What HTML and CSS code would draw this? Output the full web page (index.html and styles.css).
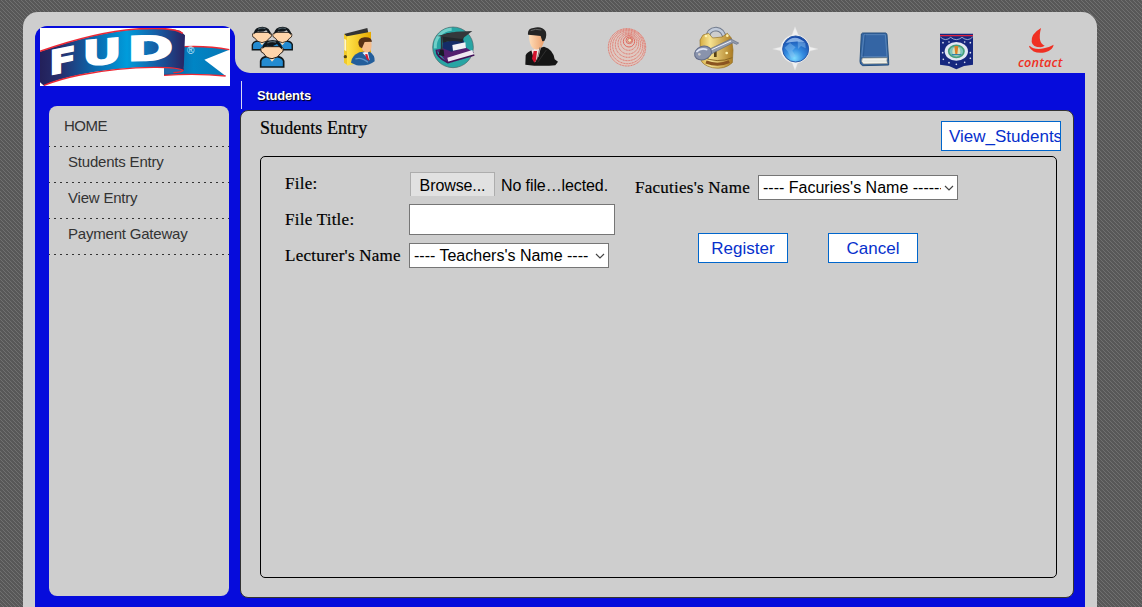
FILE: index.html
```html
<!DOCTYPE html>
<html lang="en">
<head>
<meta charset="utf-8">
<title>Students Entry</title>
<link rel="stylesheet" href="styles.css">
</head>
<body>
<div class="shell">
  <aside class="side">
    <svg class="logo" viewBox="120 84 570 174" role="img" aria-label="FUD">
      <defs>
        <linearGradient id="rib" x1="0" x2="1"><stop offset="0" stop-color="#23205a"/><stop offset=".15" stop-color="#26306f"/><stop offset=".38" stop-color="#0a69ae"/><stop offset=".6" stop-color="#009cdb"/><stop offset=".82" stop-color="#1858a0"/><stop offset="1" stop-color="#282462"/></linearGradient>
        <linearGradient id="tail" x1="0" x2="1"><stop offset="0" stop-color="#145292"/><stop offset=".45" stop-color="#0085c5"/><stop offset="1" stop-color="#0876b5"/></linearGradient>
      </defs>
      <rect x="120" y="84" width="570" height="174" fill="#fff"/>
      <path d="M545 140Q620 137 688 149L613 179L677 228Q590 219 492 226V205H550Z" fill="url(#tail)"/>
      <path d="M553 140Q625 137 688 149M677 228Q590 219 492 226" fill="none" stroke="#ee2834" stroke-width="4"/>
      <path d="M492 205Q530 202 548 209Q543 219 492 222Z" fill="#2368a8"/>
      <path d="M120 155Q290 96 410 88Q500 82 540 92L555 106L551 212Q530 202 450 202Q350 202 235 225Q170 238 132 257L120 247Z" fill="url(#rib)"/>
      <path d="M120 154Q285 96 410 87Q520 80 548 100" fill="none" stroke="#ee2834" stroke-width="5"/>
      <path d="M132 256Q180 237 240 225Q360 201 470 202Q540 203 549 211Q545 217 520 218" fill="none" stroke="#ee2834" stroke-width="4"/>
      <text class="logo-letter" transform="matrix(1.2 -.24 0 1 147 226)" font-size="100">F</text>
      <text class="logo-letter" transform="matrix(1.42 -.12 0 1 246 198)" font-size="104">U</text>
      <text class="logo-letter" transform="matrix(1.65 -.05 0 1 381 183)" font-size="102">D</text>
      <text class="logo-mark" x="561" y="161" font-size="30">®</text>
    </svg>
    <nav class="menu">
      <a class="item home">HOME</a>
      <a class="item">Students Entry</a>
      <a class="item">View Entry</a>
      <a class="item">Payment Gateway</a>
    </nav>
  </aside>
  <main class="main">
    <header class="icons">
      <svg class="w80" viewBox="0 48 240 141">
        <defs><g id="person"><path d="M-34 79V61Q-31 50-16 48H16Q31 50 35 61V79Z" fill="#238bd0" stroke="#101719" stroke-width="5"/><path d="M-12 47L0 63L14 47Z" fill="#ffe0bd"/><path d="M-26 18Q-37 21-32 34L-25 38Q-19 52 0 54Q19 52 26 38L32 34Q37 21 27 18Z" fill="#ffd5aa" stroke="#251b14" stroke-width="3"/><path d="M-29 25Q-29-1 2-2Q30 0 31 27Q21 19 15 10Q4 18-14 15Q-22 17-29 25" fill="#10171b"/><path d="M-14 7Q0-1 12 5" stroke="#50616a" stroke-width="4" fill="none"/></g></defs>
        <use href="#person" transform="translate(81 52) scale(.85)"/><use href="#person" transform="translate(142 52) scale(.85)"/><use href="#person" transform="translate(111 92)"/>
      </svg>
      <svg class="w90" viewBox="240 48 270 141">
        <defs><linearGradient id="folder"><stop stop-color="#ffe34c"/><stop offset="1" stop-color="#e7aa00"/></linearGradient></defs>
        <path d="M327 72L397 54L400 69L338 84Z" fill="#343434"/><path d="M327 72L337 80V165L327 158Z" fill="#f1c929"/><path d="M336 79L408 65V150L336 167Z" fill="url(#folder)"/><path d="M328 86L334 90V124L328 120Z" fill="#fff7ce"/><circle cx="331" cy="140" r="5" fill="#574711"/>
        <path d="M348 158Q349 137 373 127L401 123Q421 135 419 154Q402 169 365 166Z" fill="#235e9b"/><path d="M382 128L398 124L404 151Z" fill="#edf5ff"/><path d="M390 133L397 132L403 153L395 148Z" fill="#d21c32"/><path d="M374 103Q381 84 405 89Q414 101 407 121Q398 134 384 122Z" fill="#f6bc89"/><path d="M371 104Q367 84 388 82Q409 80 411 95L389 96L381 115Q372 112 371 104" fill="#573014"/><path d="M361 147Q379 140 399 157" stroke="#6194c8" stroke-width="4" fill="none"/>
      </svg>
      <svg class="w90" viewBox="510 48 270 141">
        <circle cx="654" cy="112" r="61" fill="#28a5a4" stroke="#456367" stroke-width="2"/><path d="M601 115A52 52 0 0 1 650 58" stroke="#70d0c9" stroke-width="9" fill="none"/>
        <path d="M604 119L676 102L717 128L635 157Z" fill="#542070"/><path d="M637 143L712 120L716 135L641 159Z" fill="#eee7f1"/><path d="M604 119Q603 141 639 158L718 135" fill="none" stroke="#421158" stroke-width="5"/>
        <path d="M624 96L684 87L694 113L649 125L622 114Z" fill="#142c68"/><path d="M652 105L691 97L693 114L654 122Z" fill="#f1f1f6"/><path d="M621 76Q648 59 688 76L682 97Q651 88 623 98Z" fill="#22272b"/><path d="M606 78L663 65L712 63L681 87Z" fill="#34383b"/><path d="M620 79V132" stroke="#30333b" stroke-width="5"/><path d="M615 119L626 119L628 139L611 135Z" fill="#171c24"/>
      </svg>
      <svg class="w90" viewBox="-15 48 270 141">
        <defs><linearGradient id="skin"><stop stop-color="#ffddb8"/><stop offset="1" stop-color="#ed9f6b"/></linearGradient></defs>
        <path d="M76 164L77 136Q82 125 98 120L132 110Q160 118 164 148L174 155L166 166Q120 170 76 164Z" fill="#151515"/><path d="M94 121L124 107L116 139L105 157Z" fill="#f5e5df"/><path d="M101 123L111 123L108 151L103 158L96 146Z" fill="#d2142d"/><path d="M87 72Q104 62 127 72Q137 90 130 100L126 110Q112 124 98 114Q87 103 87 72" fill="url(#skin)"/><path d="M84 74Q82 55 100 54Q125 47 137 64Q142 80 133 93L127 94L122 78Q100 75 84 74" fill="#242424"/><path d="M92 62Q106 55 124 60" stroke="#626262" stroke-width="3" fill="none"/><path d="M120 112L111 151M139 120L113 157" stroke="#3b3b3b" stroke-width="2"/>
      </svg>
      <svg class="w85" viewBox="255 48 255 141">
        <circle cx="381" cy="112" r="57" fill="#dfc8c1"/><g fill="none" stroke="#df6a5f" stroke-width="3" stroke-dasharray="3 1.8"><circle cx="381" cy="112" r="56"/><circle cx="382" cy="110" r="51"/><circle cx="383" cy="107" r="45"/><circle cx="384" cy="104" r="38"/><circle cx="385" cy="101" r="31"/><circle cx="386" cy="97" r="24"/><circle cx="387" cy="94" r="17" stroke-dasharray="none"/><circle cx="388" cy="91" r="10" stroke-dasharray="none"/></g><circle cx="389" cy="91" r="6" fill="#efe0bd" stroke="#c84735" stroke-width="2"/>
      </svg>
      <svg class="w85" viewBox="510 48 255 141">
        <defs><linearGradient id="gold"><stop stop-color="#d6ad41"/><stop offset=".3" stop-color="#f6e291"/><stop offset="1" stop-color="#ac7b22"/></linearGradient></defs>
        <path d="M622 86Q624 58 648 57Q671 59 674 87" fill="none" stroke="#717b8d" stroke-width="13"/><path d="M622 86Q624 58 648 57Q671 59 674 87" fill="none" stroke="#c0cada" stroke-width="7"/>
        <path d="M600 90L609 75L626 70L638 84L666 81L682 70L694 84L699 120L697 158Q674 180 637 173Q605 165 602 147Z" fill="url(#gold)" stroke="#937022" stroke-width="2"/><path d="M605 140Q652 162 697 143" stroke="#8b6823" stroke-width="3" fill="none"/><path d="M618 156Q654 170 688 155" stroke="#8a5420" stroke-width="9" fill="none"/><circle cx="618" cy="78" r="4" fill="#fff2ae"/><circle cx="682" cy="77" r="4" fill="#fff2ae"/><path d="M642 122H650V141H642Z" fill="#574114"/>
        <path d="M623 120L693 87L708 95L716 99L710 103L699 98L632 133Z" fill="#929bad" stroke="#606981" stroke-width="2"/><ellipse cx="609" cy="129" rx="26" ry="20" transform="rotate(-20 609 129)" fill="#8993ad" stroke="#616b88" stroke-width="3"/><path d="M589 126Q602 112 622 119" stroke="#dde4f5" stroke-width="5" fill="none"/><path d="M635 119L693 93" stroke="#eef1fb" stroke-width="3"/><circle cx="598" cy="133" r="4" fill="#cbc9c9"/><circle cx="680" cy="129" r="4" fill="#fff5b0"/>
      </svg>
      <svg class="w80" viewBox="15 48 240 141">
        <defs><radialGradient id="globe" cx=".45" cy=".85" r=".8"><stop stop-color="#7fdcff"/><stop offset=".45" stop-color="#338be0"/><stop offset="1" stop-color="#1648a8"/></radialGradient></defs>
        <path d="M135 50L145 74Q174 84 180 111L204 117L180 123Q170 153 143 160L135 181L127 160Q98 150 91 122L68 117L92 111Q97 83 126 74Z" fill="#f0f0f0" stroke="#dfdfdf"/><circle cx="137" cy="117" r="39" fill="url(#globe)" stroke="#295aa9" stroke-width="3"/><path d="M104 113L120 99L137 112L127 122L137 138L124 144L113 124ZM143 91L166 99L167 115L153 108L144 117Z" fill="#8cc4f2" opacity=".45"/><path d="M107 99Q132 68 165 97Q138 91 107 99" fill="#c2e1ff" opacity=".65"/>
      </svg>
      <svg class="w80" viewBox="255 48 240 141">
        <path d="M334 72Q336 68 342 69H407Q411 70 411 75L416 154V165L338 167Q329 163 330 154Z" fill="#3465a4" stroke="#26517f" stroke-width="3"/><path d="M342 74H406L411 140H335Z" fill="none" stroke="#6693bf" stroke-width="2"/><path d="M346 74L340 140" stroke="#23528c" stroke-width="2"/><path d="M337 144L412 143Q409 152 413 161L340 162Q331 155 337 144Z" fill="#f0f0e9" stroke="#737972" stroke-width="2"/><path d="M340 153H408" stroke="#d2d4ce" stroke-width="2"/>
      </svg>
      <svg class="w85" viewBox="495 48 255 141">
        <path d="M570 71H669V164L642 168L619 178L597 168L570 164Z" fill="#16277e"/><path d="M570 77H669" stroke="#dd213e" stroke-width="4"/><path d="M571 81Q586 96 602 82Q619 96 636 82Q654 96 668 81" fill="none" stroke="#d9e1f5" stroke-width="2"/><g fill="#e4e7f5"><circle cx="579" cy="98" r="2.5"/><circle cx="597" cy="96" r="2.5"/><circle cx="644" cy="96" r="2.5"/><circle cx="661" cy="98" r="2.5"/><circle cx="578" cy="128" r="2.5"/><circle cx="661" cy="128" r="2.5"/><circle cx="580" cy="148" r="2.5"/><circle cx="597" cy="158" r="2.5"/><circle cx="619" cy="163" r="2.5"/><circle cx="644" cy="157" r="2.5"/><circle cx="661" cy="145" r="2.5"/></g><ellipse cx="619" cy="124" rx="35" ry="28" fill="#e3e8f3"/><ellipse cx="619" cy="124" rx="23" ry="18" fill="#7dc5bb" stroke="#469f7a" stroke-width="5"/><ellipse cx="619" cy="125" rx="12" ry="14" fill="#d5e1bd"/><path d="M613 108H625L622 132H616Z" fill="#dc8127"/><path d="M605 134H634" stroke="#3083aa" stroke-width="4"/>
      </svg>
      <svg class="w85" viewBox="750 48 255 141">
        <path d="M873 54Q842 72 845 96Q848 112 872 112Q879 111 884 107Q862 99 873 54Z" fill="#ef3023"/><path d="M839 107Q853 121 882 115Q899 111 911 104Q909 120 886 127Q851 134 837 110Z" fill="#ef3023"/><text class="contact" x="804" y="170" textLength="133" lengthAdjust="spacing">contact</text>
      </svg>
    </header>
    <div class="tabs"><span class="tab">Students</span></div>
    <section class="panel">
      <div class="panel-head">
        <h1 class="title">Students Entry</h1>
        <button class="btn view">View_Students</button>
      </div>
      <form class="form">
        <div class="left">
          <label class="label">File:</label>
          <div class="file"><span class="browse">Browse...</span><span>No file…lected.</span></div>
          <label class="label">File Title:</label>
          <input class="text" type="text">
          <label class="label">Lecturer's Name</label>
          <div class="select"><span class="value">---- Teachers's Name ----</span><svg class="chev" viewBox="0 0 10 6"><path d="M1 1L5 5L9 1"/></svg></div>
        </div>
        <div class="right">
          <div class="row"><label class="label fac">Facuties's Name</label><div class="select"><span class="value">---- Facuries's Name -------</span><svg class="chev" viewBox="0 0 10 6"><path d="M1 1L5 5L9 1"/></svg></div></div>
          <div class="actions"><button type="button" class="btn">Register</button><button type="button" class="btn">Cancel</button></div>
        </div>
      </form>
    </section>
  </main>
</div>
</body>
</html>
```
FILE: styles.css
```css
* { box-sizing: border-box; }
body {
  margin: 0;
  padding: 12px 45px 0 23px;
  height: 607px;
  overflow: hidden;
  font-family: "Liberation Sans", Arial, sans-serif;
  background: linear-gradient(45deg, #707070 12.5%, #585858 12.5% 50%, #707070 50% 62.5%, #585858 62.5%) 0 0 / 4px 4px;
}
.shell {
  display: flex;
  width: 1074px;
  height: 620px;
  padding: 14px 12px 0;
  background: #cecece;
  border-radius: 15px 15px 0 0;
}
.side {
  width: 200px;
  padding-top: 2px;
  background: #060cdc;
  border-radius: 12px 12px 0 0;
}
.logo { display: block; width: 190px; height: 58px; margin: 0 5px; }
.logo-letter {
  font-family: "DejaVu Sans", sans-serif;
  font-weight: bold;
  fill: #fff;
  stroke: #fff;
  stroke-width: 4px;
}
.logo-mark { font-family: "Liberation Sans", sans-serif; fill: #d8efff; }
.menu {
  width: 180px;
  height: 490px;
  margin: 20px 0 0 14px;
  padding-top: 5px;
  background: #cecece;
  border-radius: 8px;
}
.item {
  display: block;
  height: 36px;
  padding-left: 19px;
  font-size: 15px;
  line-height: 30px;
  letter-spacing: -.2px;
  color: #333;
  background: linear-gradient(90deg, #333 2px, transparent 2px) -1px 100% / 6px 1px repeat-x;
}
.home { padding-left: 15px; letter-spacing: -.5px; }
.main { width: 850px; background: #060cdc; }
.icons {
  display: flex;
  height: 47px;
  background: #cecece;
  border-bottom-left-radius: 15px;
}
.icons svg { display: block; height: 47px; flex: none; }
.w80 { width: 80px; }
.w85 { width: 85px; }
.w90 { width: 90px; }
.contact { font: italic 600 38px "Open Sans", sans-serif; fill: #ef3023; }
.tabs { height: 37px; padding: 8px 0 0 6px; }
.tab {
  display: block;
  height: 28px;
  padding-left: 15px;
  border-left: 1px solid #d8d8f4;
  font-size: 13px;
  font-weight: bold;
  line-height: 29px;
  letter-spacing: -.2px;
  color: #fff;
  text-shadow: 1px 1px 1px #000;
}
.panel {
  width: 834px;
  height: 488px;
  margin-left: 5px;
  padding: 0 12px 0 19px;
  border: 1px solid #333;
  border-radius: 8px;
  background: #cecece;
}
.panel-head { display: flex; justify-content: space-between; height: 45px; }
.title {
  margin: 6px 0 0;
  font: 18px/22px "Liberation Serif", serif;
  letter-spacing: .05px;
  -webkit-text-stroke: .2px #000;
}
.btn {
  width: 90px;
  height: 30px;
  padding: 1px 0 0;
  border: 1px solid #0066cc;
  background: #fff;
  color: #0630cc;
  font: 17px/27px "Liberation Sans", Arial, sans-serif;
}
.view { width: 120px; margin-top: 10px; padding: 0 0 0 7px; overflow: hidden; text-align: left; }
.form {
  display: flex;
  width: 797px;
  height: 422px;
  padding-left: 24px;
  border: 1px solid #000;
  border-radius: 5px;
}
.left {
  display: grid;
  grid-template-columns: 124px 206px;
  grid-template-rows: 36px 36px 36px;
  align-content: start;
  padding-top: 11px;
}
.label {
  font: 17px/32px "Liberation Serif", serif;
  letter-spacing: .25px;
  -webkit-text-stroke: .2px #000;
  white-space: nowrap;
}
.file {
  display: flex;
  gap: 6px;
  height: 24px;
  margin: 4px 0 0 1px;
  font-size: 16px;
  line-height: 27px;
  letter-spacing: -.1px;
  white-space: nowrap;
}
.browse {
  width: 85px;
  border: 1px solid #adadad;
  border-bottom: 0;
  background: #e1e1e1;
  line-height: 25px;
  text-align: center;
}
.text { width: 206px; height: 31px; border: 1px solid #767676; background: #fff; }
.select {
  display: flex;
  align-items: center;
  justify-content: space-between;
  width: 200px;
  height: 25px;
  margin-top: 3px;
  padding: 0 3px 0 4px;
  border: 1px solid #767676;
  background: #fff;
  font-size: 16px;
  white-space: nowrap;
}
.value { width: 178px; overflow: hidden; line-height: 23px; }
.chev { width: 10px; height: 6px; flex: none; fill: none; stroke: #444; stroke-width: 1.2; }
.right { padding: 15px 0 0 20px; }
.row { display: flex; }
.fac { width: 123px; line-height: 31px; }
.actions { display: flex; gap: 40px; margin: 30px 0 0 63px; }
```
